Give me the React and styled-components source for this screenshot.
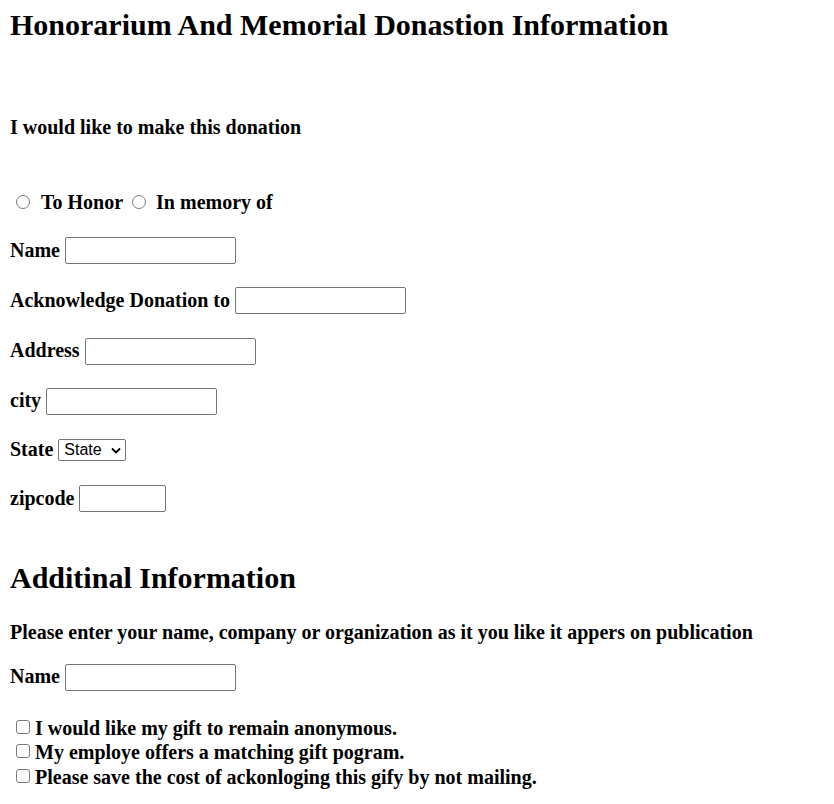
import React from 'react';
import styled, { createGlobalStyle } from 'styled-components';

const GlobalStyle = createGlobalStyle`
  html, body { margin: 0; padding: 0; background: #ffffff; }
  body { font-family: "Liberation Serif", "Times New Roman", serif; color: #000000; }
`;

const Page = styled.div`
  padding: 8px 10px 0;
  font-size: 20px;
  font-weight: 700;
  line-height: 23px;
`;

const Heading = styled.h1`
  margin: ${(p) => p.$top || 0}px 0 0;
  font-size: 30px;
  line-height: 34px;
  font-weight: 700;
`;

const Lead = styled.p`
  margin: ${(p) => p.$top}px 0 0;
  white-space: nowrap;
`;

const RadioRow = styled.div`
  display: flex;
  align-items: center;
  gap: 9px;
  height: 23px;
  margin-top: 52px;
`;

const Option = styled.label`
  display: flex;
  align-items: center;
  white-space: nowrap;
`;

const Radio = styled.input.attrs({ type: 'radio' })`
  appearance: none;
  -webkit-appearance: none;
  flex: none;
  box-sizing: border-box;
  width: 14px;
  height: 14px;
  margin: 0 ${(p) => p.$gap}px 1px ${(p) => p.$lead}px;
  border: 1px solid #7a7a7a;
  border-radius: 50%;
  background: #ffffff;
`;

const Fields = styled.div`
  display: flex;
  flex-direction: column;
  gap: 23.3px;
  margin-top: ${(p) => p.$top}px;
`;

const Row = styled.div`
  display: flex;
  align-items: center;
  gap: 5px;
  height: ${(p) => p.$h || 27}px;
  white-space: nowrap;
`;

const FieldLabel = styled.label`
  padding-bottom: 1px;
`;

const TextBox = styled.input.attrs({ type: 'text' })`
  flex: none;
  box-sizing: border-box;
  width: ${(p) => p.$w || 171}px;
  height: 27px;
  margin: 0;
  padding: 1px 2px;
  border: 1px solid #767676;
  border-radius: 2px;
  background: #ffffff;
  font-family: "Liberation Sans", Arial, sans-serif;
  font-size: 13px;
`;

const SelectBox = styled.div`
  position: relative;
  display: flex;
`;

const StateSelect = styled.select`
  appearance: none;
  -webkit-appearance: none;
  box-sizing: border-box;
  width: 68px;
  height: 22px;
  margin: 0;
  padding: 0 0 0 5px;
  border: 1px solid #767676;
  border-radius: 2px;
  background: #ffffff;
  font-family: "Liberation Sans", Arial, sans-serif;
  font-size: 16px;
  font-weight: 400;
  line-height: 20px;
  color: #000000;
`;

const Chevron = styled.svg`
  position: absolute;
  right: 5px;
  top: 8px;
  width: 10px;
  height: 7px;
  pointer-events: none;
`;

const Checklist = styled.div`
  margin-top: 25.3px;
`;

const CheckRow = styled.label`
  display: flex;
  align-items: center;
  height: 24.33px;
  white-space: nowrap;
`;

const Check = styled.input.attrs({ type: 'checkbox' })`
  appearance: none;
  -webkit-appearance: none;
  flex: none;
  box-sizing: border-box;
  width: 14px;
  height: 14px;
  margin: 0 5px 3px 6px;
  border: 1px solid #7a7a7a;
  border-radius: 3px;
  background: #ffffff;
`;

export default function App() {
  return (
    <>
      <GlobalStyle />
      <Page>
        <Heading>Honorarium And Memorial Donastion Information</Heading>
        <Lead $top={73.5}>I would like to make this donation</Lead>
        <RadioRow>
          <Option>
            <Radio name="kind" $lead={6} $gap={11} />
            To Honor
          </Option>
          <Option>
            <Radio name="kind" $lead={0} $gap={10} />
            In memory of
          </Option>
        </RadioRow>
        <Fields $top={23.5}>
          <Row>
            <FieldLabel>Name</FieldLabel>
            <TextBox />
          </Row>
          <Row>
            <FieldLabel>Acknowledge Donation to</FieldLabel>
            <TextBox />
          </Row>
          <Row>
            <FieldLabel>Address</FieldLabel>
            <TextBox />
          </Row>
          <Row>
            <FieldLabel>city</FieldLabel>
            <TextBox />
          </Row>
          <Row $h={24}>
            <FieldLabel>State</FieldLabel>
            <SelectBox>
              <StateSelect defaultValue="State">
                <option>State</option>
              </StateSelect>
              <Chevron viewBox="0 0 10 7">
                <path d="M1 1.5 L5 5.5 L9 1.5" fill="none" stroke="#000" strokeWidth="1.8" />
              </Chevron>
            </SelectBox>
          </Row>
          <Row>
            <FieldLabel>zipcode</FieldLabel>
            <TextBox $w={87} />
          </Row>
        </Fields>
        <Heading as="h2" $top={48.5}>Additinal Information</Heading>
        <Lead $top={25.8}>
          Please enter your name, company or organization as it you like it appers on publication
        </Lead>
        <Fields $top={20.2}>
          <Row>
            <FieldLabel>Name</FieldLabel>
            <TextBox />
          </Row>
        </Fields>
        <Checklist>
          <CheckRow>
            <Check />
            I would like my gift to remain anonymous.
          </CheckRow>
          <CheckRow>
            <Check />
            My employe offers a matching gift pogram.
          </CheckRow>
          <CheckRow>
            <Check />
            Please save the cost of ackonloging this gify by not mailing.
          </CheckRow>
        </Checklist>
      </Page>
    </>
  );
}
